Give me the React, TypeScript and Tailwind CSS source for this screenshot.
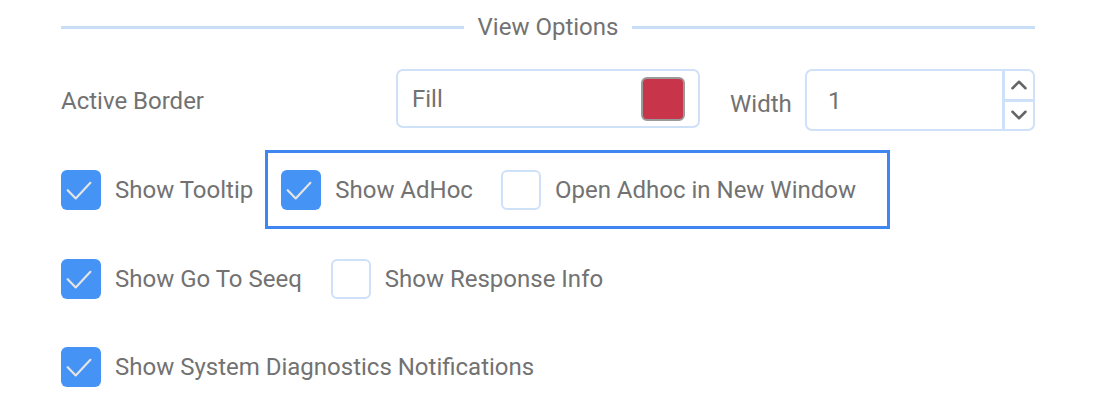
import { ChevronUp, ChevronDown } from "lucide-react";

function Checkbox({ checked }: { checked: boolean }) {
  if (checked) {
    return (
      <span className="flex h-10 w-10 shrink-0 items-center justify-center rounded-[6px] bg-[#4493f5]">
        <svg width="40" height="40" viewBox="0 0 40 40" fill="none">
          <path d="M6.7 20.2 L14.7 28.4 L29.4 12.8" stroke="#e4e4e4" strokeWidth="2.2" strokeLinecap="round" strokeLinejoin="round" />
        </svg>
      </span>
    );
  }
  return <span className="h-10 w-10 shrink-0 rounded-[6px] border-2 border-[#cfe1f8] bg-white" />;
}

function Option({ label, checked }: { label: string; checked: boolean }) {
  return (
    <label className="flex items-center gap-[14px]">
      <Checkbox checked={checked} />
      <span className="text-[24px] leading-none text-[#727272]">{label}</span>
    </label>
  );
}

export default function App() {
  return (
    <div className="h-[416px] w-[1096px] overflow-hidden bg-white pl-[61px] pr-[61px] font-['Roboto',sans-serif]">
      <div className="flex h-[54px] items-center gap-[14px]">
        <div className="h-[3px] flex-1 bg-[#c8ddf6]" />
        <span className="text-[24px] leading-none text-[#727272]">View Options</span>
        <div className="h-[3px] flex-1 bg-[#c8ddf6]" />
      </div>

      <div className="mt-[15px] flex items-start">
        <span className="mt-[20px] w-[335px] text-[24px] leading-none text-[#727272]">Active Border</span>
        <div className="flex h-[59px] w-[304px] items-center justify-between rounded-[7px] border-2 border-[#cfe1f8] pl-[14px] pr-[13px]">
          <span className="text-[24px] leading-none text-[#727272]">Fill</span>
          <span className="h-[44px] w-[44px] rounded-[6px] border-2 border-[#9a9a9a] bg-[#c8344a]" />
        </div>
        <span className="ml-[30px] mt-[23px] w-[75px] text-[24px] leading-none text-[#727272]">Width</span>
        <div className="flex h-[62px] flex-1 overflow-hidden rounded-[7px] border-2 border-[#cfe1f8]">
          <span className="flex-1 pl-[21px] pt-[18px] text-[24px] leading-none text-[#727272]">1</span>
          <div className="flex w-[31px] flex-col border-l-[3px] border-[#cfe1f8]">
            <span className="flex flex-1 items-center justify-center border-b-[3px] border-[#cfe1f8]">
              <ChevronUp size={26} strokeWidth={2.3} color="#666666" />
            </span>
            <span className="flex flex-1 items-center justify-center">
              <ChevronDown size={26} strokeWidth={2.3} color="#666666" />
            </span>
          </div>
        </div>
      </div>

      <div className="mt-[19px] flex items-center">
        <Option label="Show Tooltip" checked />
        <div className="ml-[12px] flex h-[79px] items-center gap-[28px] border-[3px] border-[#3f86f1] pl-[13px] pr-[31px]">
          <Option label="Show AdHoc" checked />
          <Option label="Open Adhoc in New Window" checked={false} />
        </div>
      </div>

      <div className="mt-[30px] flex items-center gap-[29px]">
        <Option label="Show Go To Seeq" checked />
        <Option label="Show Response Info" checked={false} />
      </div>

      <div className="mt-[48px] flex items-center">
        <Option label="Show System Diagnostics Notifications" checked />
      </div>
    </div>
  );
}
